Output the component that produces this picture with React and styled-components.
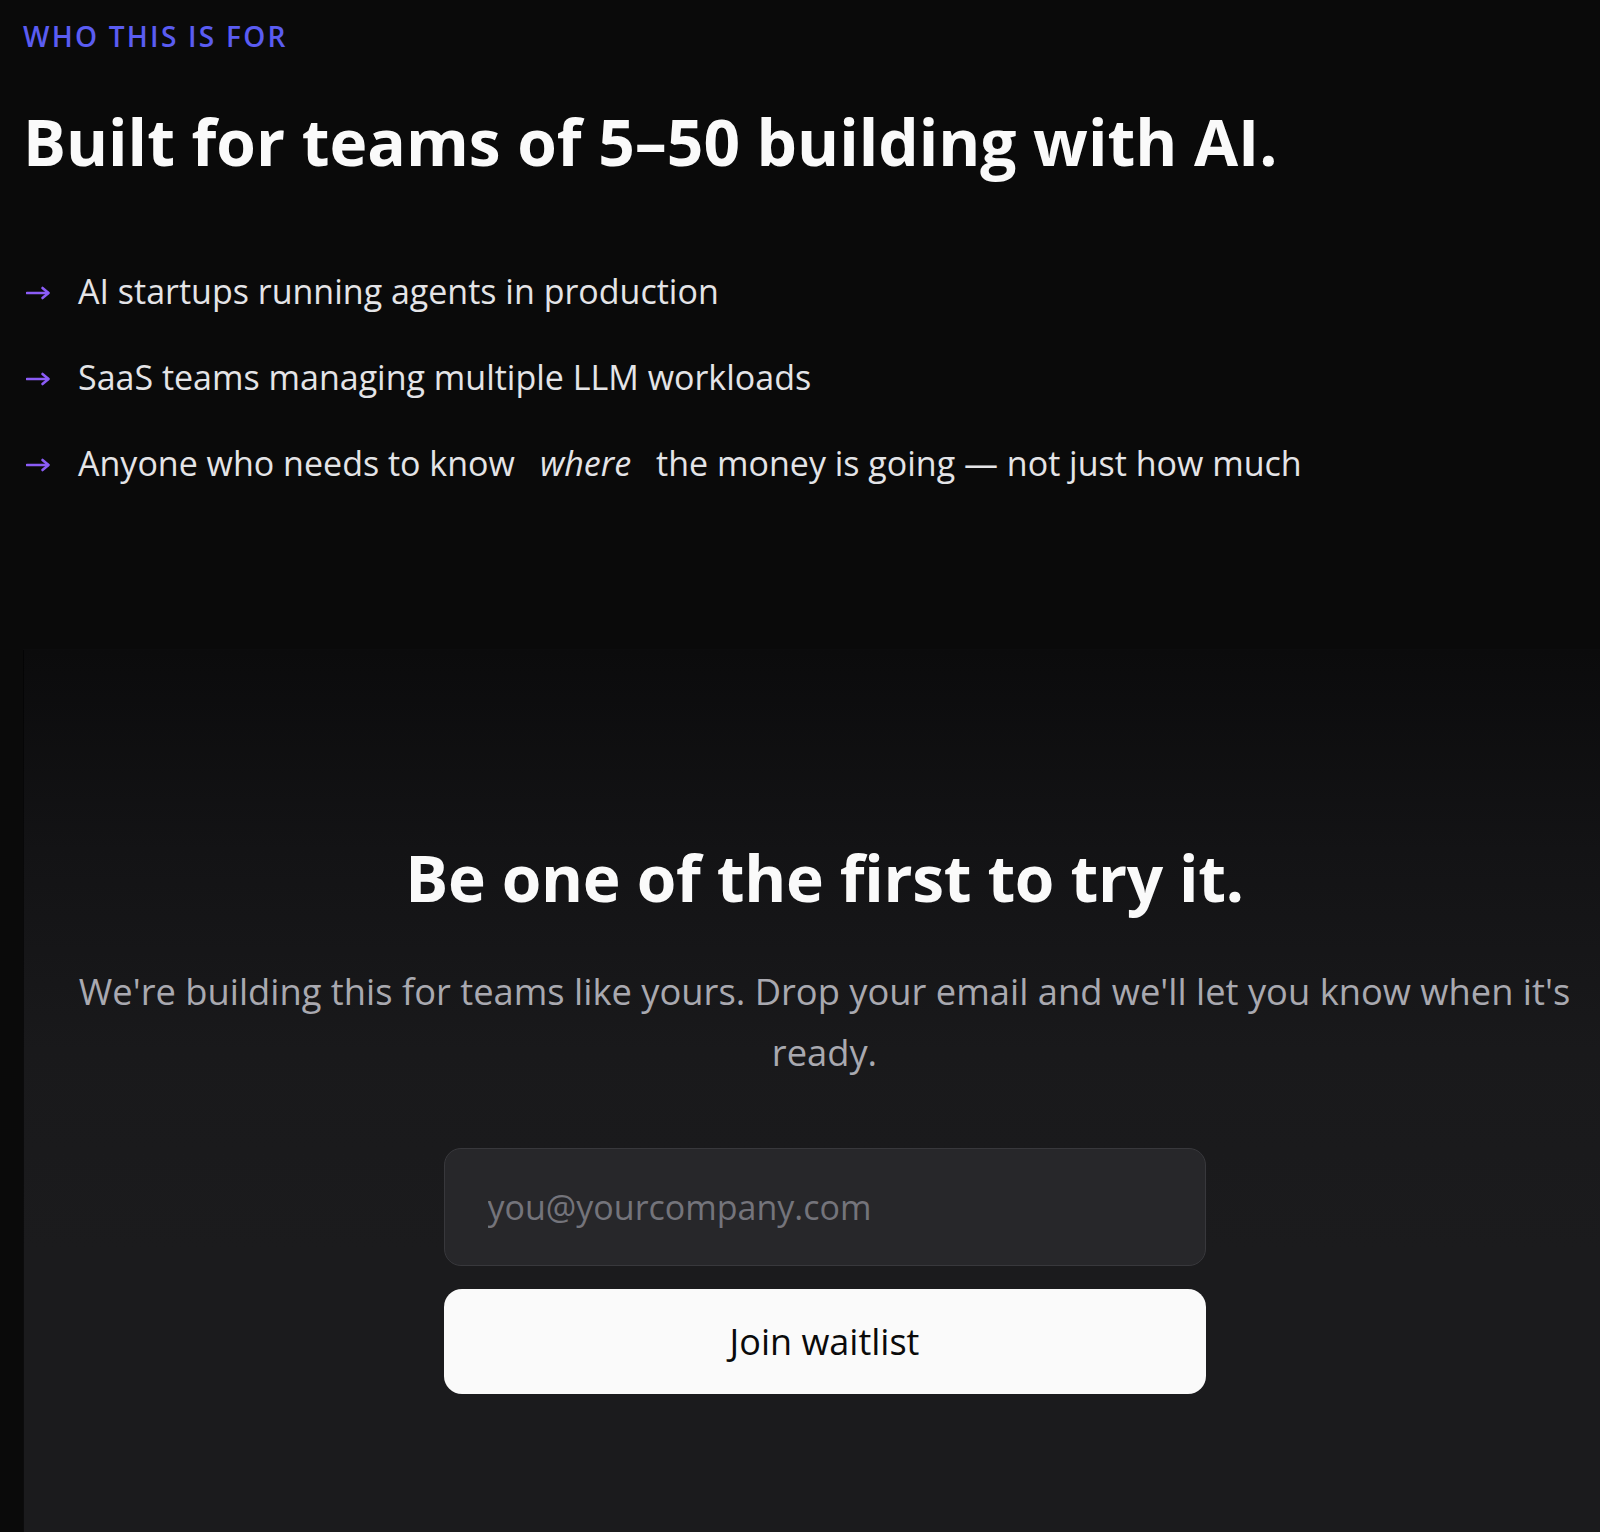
import React from "react";
import styled, { createGlobalStyle } from "styled-components";

const GlobalStyle = createGlobalStyle`
  html, body {
    margin: 0;
    padding: 0;
    background: #0a0a0a;
    overflow-x: hidden;
  }
  body {
    font-family: "Open Sans", "Noto Sans", sans-serif;
    color: #fafafa;
  }
  * { box-sizing: border-box; }
`;

const Page = styled.main`
  width: 1625px;
  padding: 16px 0 0 23px;
  min-height: 1532px;
`;

const Audience = styled.section`
  display: flex;
  flex-direction: column;
  align-items: flex-start;
`;

const Eyebrow = styled.div`
  font-size: 28px;
  line-height: 40px;
  font-weight: 600;
  letter-spacing: 0.08em;
  text-transform: uppercase;
  color: #5a5cf2;
`;

const Heading = styled.h2`
  margin: ${(p) => p.$mt || 0}px 0 0;
  font-size: 64px;
  line-height: 1.1;
  font-weight: 700;
  letter-spacing: ${(p) => (p.$center ? "-0.005em" : "0")};
  color: #fafafa;
  text-align: ${(p) => (p.$center ? "center" : "left")};
`;

const List = styled.ul`
  list-style: none;
  margin: 89px 0 0;
  padding: 0;
  display: flex;
  flex-direction: column;
  gap: 35px;
`;

const Item = styled.li`
  display: flex;
  align-items: center;
  gap: 27px;
  padding-left: 3px;
  font-size: 34px;
  line-height: 51px;
  color: #e4e4e7;
`;

const ArrowMark = styled.svg`
  flex: none;
  width: 25px;
  height: 14px;
  margin-top: 2px;
`;

const Em = styled.em`
  font-style: italic;
  padding: 0 25px;
`;

const Card = styled.section`
  margin-top: 160px;
  width: 1602px;
  min-height: 900px;
  border: 1px solid rgba(0, 0, 0, 0.55);
  border-right: none;
  border-bottom: none;
  background: linear-gradient(180deg, #0b0b0c 0px, #131315 200px, #19191b 400px, #1b1b1d 600px, #1b1b1d 100%);
  padding: 193px 40px 0;
  display: flex;
  flex-direction: column;
  align-items: center;
`;

const Lead = styled.p`
  margin: 47px 0 0;
  max-width: 1530px;
  font-size: 36.3px;
  line-height: 61px;
  color: #a9a9b0;
  text-align: center;
`;

const Form = styled.form`
  margin-top: 65px;
  width: 762px;
  display: flex;
  flex-direction: column;
  gap: 23px;
`;

const EmailInput = styled.input`
  height: 118px;
  width: 100%;
  padding: 0 43px;
  border-radius: 17px;
  border: 1.5px solid #38383c;
  background: #27272a;
  color: #fafafa;
  font-family: "Open Sans", "Noto Sans", sans-serif;
  font-size: 34px;
  outline: none;
  &::placeholder {
    color: #74747b;
  }
`;

const SubmitButton = styled.button`
  height: 105px;
  width: 100%;
  border: none;
  border-radius: 18px;
  background: #fafafa;
  color: #0a0a0a;
  font-family: "Open Sans", "Noto Sans", sans-serif;
  font-size: 36px;
  font-weight: 500;
  cursor: pointer;
`;

function Arrow() {
  return (
    <ArrowMark viewBox="0 0 25 14" fill="none">
      <path d="M1 7H22" stroke="#8b5cf6" strokeWidth="2.6" strokeLinecap="round" />
      <path d="M16.5 2L22.5 7L16.5 12" stroke="#8b5cf6" strokeWidth="2.6" strokeLinecap="round" strokeLinejoin="round" />
    </ArrowMark>
  );
}

export default function App() {
  return (
    <>
      <GlobalStyle />
      <Page>
        <Audience>
          <Eyebrow>Who this is for</Eyebrow>
          <Heading $mt={51}>Built for teams of 5–50 building with AI.</Heading>
          <List>
            <Item>
              <Arrow />
              <span>AI startups running agents in production</span>
            </Item>
            <Item>
              <Arrow />
              <span>SaaS teams managing multiple LLM workloads</span>
            </Item>
            <Item>
              <Arrow />
              <span>
                Anyone who needs to know<Em>where</Em>the money is going — not just how much
              </span>
            </Item>
          </List>
        </Audience>
        <Card>
          <Heading $center>Be one of the first to try it.</Heading>
          <Lead>
            We're building this for teams like yours. Drop your email and we'll let you know when it's ready.
          </Lead>
          <Form onSubmit={(e) => e.preventDefault()}>
            <EmailInput type="email" placeholder="you@yourcompany.com" />
            <SubmitButton type="submit">Join waitlist</SubmitButton>
          </Form>
        </Card>
      </Page>
    </>
  );
}
